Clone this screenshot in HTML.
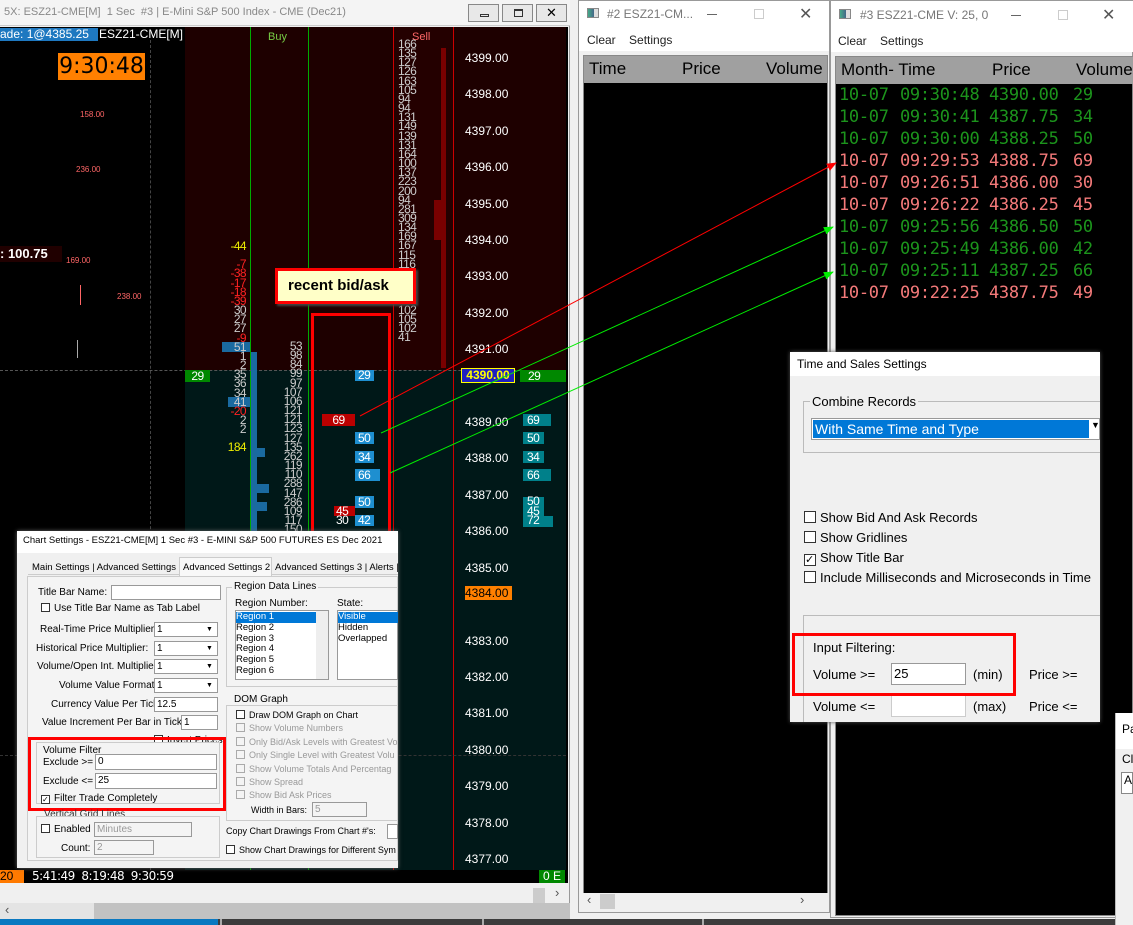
<!DOCTYPE html>
<html><head><meta charset="utf-8"><style>
*{margin:0;padding:0;box-sizing:border-box}
body{width:1133px;height:925px;overflow:hidden;background:#f0f0f0;position:relative;font-family:"Liberation Sans",sans-serif}
.a{position:absolute}
.n{font-family:"Liberation Sans",sans-serif;font-size:12px;letter-spacing:-0.6px;white-space:pre}
.ui{font-size:10px;color:#000;white-space:nowrap}
.cb{display:inline-block;width:9px;height:9px;border:1px solid #333;background:#fff;vertical-align:-1px;margin-right:4px}
.cbg{border-color:#aaa;background:#f4f4f4}
.inp{background:#fff;border:1px solid #999;height:15px;font-size:10px;padding-left:2px;line-height:13px}
.ts{font-family:"DejaVu Sans Mono",monospace;font-size:17px;white-space:pre;line-height:22px;letter-spacing:-0.3px}
.g{color:#1c941c}.r{color:#f47a7a}
</style></head><body>

<div class="a" style="left:0;top:0;width:570px;height:910px;background:#f0f0f0;border-right:1px solid #999"></div>
<div class="a" style="left:0;top:0;width:570px;height:26px;background:#f4f4f4;border-bottom:1px solid #ccc"></div>
<div class="a" style="left:4px;top:6px;font-size:11px;color:#888;white-space:pre">5X: ESZ21-CME[M]  1 Sec  #3 | E-Mini S&amp;P 500 Index - CME (Dec21)</div>
<div class="a" style="left:468px;top:4px;width:31px;height:18px;border:1px solid #888;background:#e8e8e8"><div class="a" style="left:11px;top:9px;width:9px;height:3px;border:1px solid #333"></div></div>
<div class="a" style="left:502px;top:4px;width:31px;height:18px;border:1px solid #888;background:#e8e8e8"><div class="a" style="left:11px;top:4px;width:9px;height:8px;border:1px solid #333;border-top-width:2px"></div></div>
<div class="a" style="left:536px;top:4px;width:31px;height:18px;border:1px solid #888;background:#e8e8e8;font-size:13px;text-align:center;line-height:16px">✕</div>

<div class="a" style="left:0;top:27px;width:568px;height:843px;background:#000"></div>
<div class="a" style="left:185px;top:27px;width:381px;height:343px;background:#1e0000"></div>
<div class="a" style="left:185px;top:370px;width:381px;height:500px;background:#001818"></div>
<div class="a" style="left:393px;top:27px;width:60px;height:343px;background:#240000"></div>
<div class="a" style="left:250px;top:27px;width:1px;height:843px;background:#0a0"></div>
<div class="a" style="left:308px;top:27px;width:1px;height:843px;background:#0a0"></div>
<div class="a" style="left:393px;top:27px;width:1px;height:843px;background:#c00"></div>
<div class="a" style="left:453px;top:27px;width:1px;height:843px;background:#c00"></div>
<div class="a" style="left:150px;top:40px;width:0;height:830px;border-left:1px dashed #444"></div>
<div class="a" style="left:0;top:370px;width:566px;height:0;border-top:1px dashed #555"></div>
<div class="a" style="left:0;top:755px;width:566px;height:0;border-top:1px dashed #333"></div>
<div class="a" style="left:441px;top:48px;width:5px;height:320px;background:#7a0000"></div>
<div class="a" style="left:434px;top:200px;width:12px;height:40px;background:#7a0000"></div>

<div class="a" style="left:0;top:28px;width:98px;height:13px;background:#1e78c0;color:#fff;font-size:12px;line-height:13px">ade: 1@4385.25</div>
<div class="a" style="left:99px;top:27px;color:#fff;font-size:12px">ESZ21-CME[M]</div>
<div class="a" style="left:268px;top:31px;color:#7c4;font-size:11px">Buy</div>
<div class="a" style="left:412px;top:31px;color:#f66;font-size:11px">Sell</div>
<div class="a" style="left:58px;top:53px;width:87px;height:27px;background:#ff8000;color:#000;font-size:22px;line-height:27px;text-align:center;font-family:'DejaVu Sans',sans-serif">9:30:48</div>
<div class="a" style="left:0;top:246px;width:62px;height:16px;background:#200000;color:#fff;font-weight:bold;font-size:13px;line-height:16px">: 100.75</div>
<div class="a" style="left:80px;top:110px;color:#f66;font-size:8px">158.00</div>
<div class="a" style="left:76px;top:165px;color:#f66;font-size:8px">236.00</div>
<div class="a" style="left:66px;top:256px;color:#f66;font-size:8px">169.00</div>
<div class="a" style="left:117px;top:292px;color:#f66;font-size:8px">238.00</div>
<div class="a" style="left:80px;top:285px;width:1px;height:20px;background:#f66"></div>
<div class="a" style="left:77px;top:340px;width:1px;height:18px;background:#aaa"></div>

<div class="a n" style="left:465px;top:40px;color:#fff;line-height:36.4px;letter-spacing:0">4399.00
4398.00
4397.00
4396.00
4395.00
4394.00
4393.00
4392.00
4391.00

4389.00
4388.00
4387.00
4386.00
4385.00

4383.00
4382.00
4381.00
4380.00
4379.00
4378.00
4377.00</div>
<div class="a" style="left:461px;top:368px;width:54px;height:15px;background:#2020c0;border:1px solid #ff0;color:#ff0;font-size:12px;font-weight:bold;line-height:13px;text-align:center">4390.00</div>
<div class="a" style="left:465px;top:586px;width:47px;height:14px;background:#ff8000;color:#000;font-size:12px;line-height:14px">4384.00</div>

<div class="a n" style="left:398px;top:40px;color:#ccc;line-height:9.15px">166
135
127
126
163
105
94
94
131
149
139
131
164
100
137
223
200
94
281
309
134
169
167
115
116
112
98
103
110
102
105
102
41</div>
<div class="a" style="left:251px;top:352px;width:6px;height:180px;background:#1a6aa0"></div>
<div class="a" style="left:251px;top:484px;width:18px;height:9px;background:#1a6aa0"></div>
<div class="a" style="left:251px;top:502px;width:16px;height:9px;background:#1a6aa0"></div>
<div class="a" style="left:251px;top:448px;width:14px;height:9px;background:#1a6aa0"></div>
<div class="a n" style="left:270px;top:342px;width:32px;text-align:right;color:#ccc;line-height:9.15px">53
98
84
99
97
107
106
121
121
123
127
135
262
119
110
288
147
286
109
117
150</div>
<div class="a" style="left:222px;top:342px;width:28px;height:10px;background:#1a6aa0"></div>
<div class="a" style="left:228px;top:397px;width:22px;height:10px;background:#1a6aa0"></div>
<div class="a n" style="left:212px;top:242px;width:34px;text-align:right;line-height:9.15px;color:#ccc"><span style="color:#ee0">-44</span>

<span style="color:#f22">-7
-38
-17
-18
-39</span>
30
27
27
<span style="color:#f22">-9</span>
51
1
2
35
36
34
41
<span style="color:#f22">-20</span>
2
2

<span style="color:#ee0">184</span></div>
<div class="a n" style="left:185px;top:370px;width:25px;height:12px;background:#080;color:#fff;text-align:center;line-height:12px">29</div>
<div class="a n" style="left:520px;top:370px;width:46px;height:12px;background:#080;color:#fff;line-height:12px;padding-left:8px">29</div>
<div class="a n" style="left:355px;top:370px;width:19px;height:11px;background:#1e8fd0;color:#fff;line-height:11px;padding-left:3px">29</div>
<div class="a n" style="left:322px;top:414px;width:33px;height:12px;background:#b00;color:#fff;line-height:12px;text-align:center">69</div>
<div class="a n" style="left:355px;top:432px;width:19px;height:12px;background:#1e8fd0;color:#fff;line-height:12px;padding-left:3px">50</div>
<div class="a n" style="left:355px;top:451px;width:19px;height:12px;background:#1e8fd0;color:#fff;line-height:12px;padding-left:3px">34</div>
<div class="a n" style="left:355px;top:469px;width:25px;height:12px;background:#1e8fd0;color:#fff;line-height:12px;padding-left:3px">66</div>
<div class="a n" style="left:355px;top:496px;width:19px;height:12px;background:#1e8fd0;color:#fff;line-height:12px;padding-left:3px">50</div>
<div class="a n" style="left:334px;top:506px;width:21px;height:10px;background:#b00;color:#fff;line-height:10px;padding-left:2px">45</div>
<div class="a n" style="left:334px;top:515px;color:#fff;line-height:10px;padding-left:2px">30</div>
<div class="a n" style="left:355px;top:515px;width:19px;height:11px;background:#1e8fd0;color:#fff;line-height:11px;padding-left:3px">42</div>
<div class="a n" style="left:523px;top:414px;width:28px;height:12px;background:#00808a;color:#fff;line-height:12px;padding-left:4px">69</div>
<div class="a n" style="left:523px;top:432px;width:21px;height:12px;background:#00808a;color:#fff;line-height:12px;padding-left:4px">50</div>
<div class="a n" style="left:523px;top:451px;width:21px;height:12px;background:#00808a;color:#fff;line-height:12px;padding-left:4px">34</div>
<div class="a n" style="left:523px;top:469px;width:28px;height:12px;background:#00808a;color:#fff;line-height:12px;padding-left:4px">66</div>
<div class="a n" style="left:523px;top:497px;width:21px;height:30px;background:#00808a;color:#fff;line-height:9.5px;padding-left:4px">50
45
72</div>
<div class="a" style="left:544px;top:516px;width:9px;height:11px;background:#00808a"></div>

<div class="a" style="left:275px;top:268px;width:141px;height:36px;background:#ffffc8;border:3px solid #f00;font-weight:bold;font-size:15px;line-height:30px;padding-left:10px;box-shadow:2px 2px 2px #444">recent bid/ask</div>
<div class="a" style="left:311px;top:313px;width:80px;height:240px;border:3px solid #f00;border-bottom:none"></div>

<div class="a" style="left:0;top:870px;width:568px;height:13px;background:#000"></div>
<div class="a" style="left:0;top:870px;width:24px;height:13px;background:#ff7a00;color:#000;font-size:12px;line-height:13px">20</div>
<div class="a" style="left:32px;top:869px;color:#fff;font-size:12px;white-space:pre;font-family:'DejaVu Sans',sans-serif;letter-spacing:-0.5px">5:41:49  8:19:48  9:30:59</div>
<div class="a" style="left:539px;top:870px;width:26px;height:13px;background:#080;color:#fff;font-size:12px;line-height:13px;text-align:center">0 E</div>
<div class="a" style="left:533px;top:888px;width:12px;height:15px;background:#ccc"></div>
<div class="a" style="left:555px;top:885px;font-size:13px;color:#555">›</div>
<div class="a" style="left:0;top:903px;width:570px;height:16px;background:#e4e4e4"></div>
<div class="a" style="left:94px;top:903px;width:476px;height:16px;background:#c2c2c2"></div>
<div class="a" style="left:5px;top:902px;font-size:13px;color:#555">‹</div>
<div class="a" style="left:0;top:919px;width:1133px;height:6px;background:#3c3c3c"></div>
<div class="a" style="left:0;top:919px;width:218px;height:6px;background:#0a78c0"></div>
<div class="a" style="left:220px;top:919px;width:2px;height:6px;background:#aaa"></div>
<div class="a" style="left:482px;top:919px;width:2px;height:6px;background:#aaa"></div>
<div class="a" style="left:702px;top:919px;width:2px;height:6px;background:#aaa"></div>

<div class="a" style="left:17px;top:531px;width:381px;height:337px;background:#f0f0f0;box-shadow:0 0 4px #666"></div>
<div class="a" style="left:17px;top:531px;width:381px;height:22px;background:#fff"></div>
<div class="a ui" style="left:23px;top:535px;font-size:9.5px">Chart Settings - ESZ21-CME[M]  1 Sec   #3 - E-MINI S&amp;P 500 FUTURES ES Dec 2021</div>
<div class="a ui" style="left:28px;top:557px;width:370px;height:18px;border-bottom:1px solid #ccc"></div>
<div class="a ui" style="left:32px;top:562px;font-size:9.5px;white-space:pre">Main Settings | Advanced Settings</div>
<div class="a ui" style="left:179px;top:557px;width:93px;height:19px;background:#f8f8f8;border:1px solid #ccc;border-bottom:none;font-size:9.5px;padding:4px 3px">Advanced Settings 2</div>
<div class="a ui" style="left:275px;top:562px;font-size:9.5px;white-space:pre">Advanced Settings 3 | Alerts |</div>
<div class="a" style="left:27px;top:576px;width:371px;height:285px;border:1px solid #ccc;background:#f4f4f4"></div>
<div class="a ui" style="left:38px;top:587px">Title Bar Name:</div>
<div class="a inp" style="left:111px;top:585px;width:110px"></div>
<div class="a ui" style="left:41px;top:603px"><span class="cb"></span>Use Title Bar Name as Tab Label</div>
<div class="a ui" style="left:40px;top:624px">Real-Time Price Multiplier:</div>
<div class="a ui" style="left:36px;top:643px">Historical Price Multiplier:</div>
<div class="a ui" style="left:37px;top:661px">Volume/Open Int. Multiplier:</div>
<div class="a ui" style="left:59px;top:680px">Volume Value Format:</div>
<div class="a ui" style="left:51px;top:699px">Currency Value Per Tick:</div>
<div class="a ui" style="left:42px;top:717px">Value Increment Per Bar in Ticks:</div>
<div class="a inp" style="left:154px;top:622px;width:64px">1<span style="float:right;width:11px;font-size:7px">▼</span></div>
<div class="a inp" style="left:154px;top:641px;width:64px">1<span style="float:right;width:11px;font-size:7px">▼</span></div>
<div class="a inp" style="left:154px;top:659px;width:64px">1<span style="float:right;width:11px;font-size:7px">▼</span></div>
<div class="a inp" style="left:154px;top:678px;width:64px">1<span style="float:right;width:11px;font-size:7px">▼</span></div>
<div class="a inp" style="left:154px;top:697px;width:64px">12.5</div>
<div class="a inp" style="left:181px;top:715px;width:37px">1</div>
<div class="a ui" style="left:154px;top:735px"><span class="cb"></span>Invert Prices</div>
<div class="a" style="left:36px;top:742px;width:184px;height:62px;border:1px solid #ccc;background:#f4f4f4"></div>
<div class="a ui" style="left:43px;top:745px">Volume Filter</div>
<div class="a ui" style="left:43px;top:757px">Exclude &gt;=</div>
<div class="a ui" style="left:43px;top:776px">Exclude &lt;=</div>
<div class="a inp" style="left:95px;top:754px;width:122px;height:16px">0</div>
<div class="a inp" style="left:95px;top:773px;width:122px;height:16px">25</div>
<div class="a ui" style="left:41px;top:793px"><span class="cb" style="font-size:8px;line-height:7px">✓</span>Filter Trade Completely</div>
<div class="a" style="left:28px;top:737px;width:198px;height:74px;border:3px solid #f00"></div>
<div class="a ui" style="left:44px;top:809px;color:#333">Vertical Grid Lines</div>
<div class="a" style="left:36px;top:816px;width:184px;height:42px;border:1px solid #ccc"></div>
<div class="a ui" style="left:41px;top:824px"><span class="cb"></span>Enabled</div>
<div class="a inp" style="left:94px;top:822px;width:98px;color:#999;background:#f4f4f4">Minutes</div>
<div class="a ui" style="left:61px;top:843px">Count:</div>
<div class="a inp" style="left:94px;top:840px;width:60px;color:#999;background:#f4f4f4">2</div>
<div class="a" style="left:226px;top:587px;width:172px;height:100px;border:1px solid #ccc"></div>
<div class="a ui" style="left:232px;top:581px;background:#f4f4f4;padding:0 2px">Region Data Lines</div>
<div class="a ui" style="left:235px;top:598px">Region Number:</div>
<div class="a ui" style="left:337px;top:598px">State:</div>
<div class="a" style="left:235px;top:610px;width:94px;height:70px;background:#fff;border:1px solid #999"></div>
<div class="a" style="left:316px;top:611px;width:12px;height:68px;background:#eee"></div>
<div class="a ui" style="left:236px;top:612px;width:80px;line-height:10.8px;font-size:9.5px"><div style="background:#0078d7;color:#fff">Region 1</div>Region 2<br>Region 3<br>Region 4<br>Region 5<br>Region 6</div>
<div class="a" style="left:337px;top:610px;width:61px;height:70px;background:#fff;border:1px solid #999"></div>
<div class="a ui" style="left:338px;top:612px;width:60px;line-height:10.8px;font-size:9.5px"><div style="background:#0078d7;color:#fff">Visible</div>Hidden<br>Overlapped</div>
<div class="a" style="left:226px;top:705px;width:172px;height:116px;border:1px solid #ccc"></div>
<div class="a ui" style="left:232px;top:694px;background:#f4f4f4;padding:0 2px">DOM Graph</div>
<div class="a ui" style="left:236px;top:709px;line-height:13.4px;font-size:9px"><span class="cb"></span>Draw DOM Graph on Chart<br><span style="color:#999"><span class="cb cbg"></span>Show Volume Numbers<br><span class="cb cbg"></span>Only Bid/Ask Levels with Greatest Vo<br><span class="cb cbg"></span>Only Single Level with Greatest Volu<br><span class="cb cbg"></span>Show Volume Totals And Percentag<br><span class="cb cbg"></span>Show Spread<br><span class="cb cbg"></span>Show Bid  Ask Prices</span></div>
<div class="a ui" style="left:251px;top:805px;font-size:9px">Width in Bars:</div>
<div class="a inp" style="left:312px;top:802px;width:55px;color:#999;background:#f4f4f4">5</div>
<div class="a ui" style="left:226px;top:826px;font-size:9px">Copy Chart Drawings From Chart #'s:</div>
<div class="a inp" style="left:387px;top:824px;width:11px"></div>
<div class="a ui" style="left:226px;top:845px;font-size:9px"><span class="cb"></span>Show Chart Drawings for Different Sym</div>

<div class="a" style="left:578px;top:0;width:252px;height:913px;background:#f0f0f0;border:1px solid #999"></div>
<div class="a" style="left:579px;top:1px;width:250px;height:28px;background:#fff"></div>
<div class="a" style="left:587px;top:8px;width:12px;height:10px;border:1px solid #888;background:linear-gradient(90deg,#4a8,#468 60%,#ddd 60%)"></div>
<div class="a" style="left:607px;top:7px;font-size:12px;color:#777">#2 ESZ21-CM...</div>
<div class="a" style="left:707px;top:14px;width:10px;height:1px;background:#666"></div>
<div class="a" style="left:754px;top:9px;width:10px;height:10px;border:1px solid #ccc"></div>
<div class="a" style="left:799px;top:4px;font-size:16px;color:#555">✕</div>
<div class="a" style="left:579px;top:29px;width:250px;height:22px;background:#fff"></div>
<div class="a" style="left:587px;top:33px;font-size:12px;color:#222;white-space:pre">Clear    Settings</div>
<div class="a" style="left:583px;top:55px;width:245px;height:840px;background:#000;border:1px solid #888"></div>
<div class="a" style="left:584px;top:56px;width:243px;height:27px;background:#a0a0a0"></div>
<div class="a" style="left:589px;top:59px;font-size:17px">Time</div>
<div class="a" style="left:682px;top:59px;font-size:17px">Price</div>
<div class="a" style="left:766px;top:59px;font-size:17px;width:61px;overflow:hidden">Volume</div>
<div class="a" style="left:583px;top:893px;width:245px;height:17px;background:#f0f0f0"></div>
<div class="a" style="left:600px;top:894px;width:15px;height:15px;background:#ccc"></div>
<div class="a" style="left:587px;top:892px;font-size:13px;color:#555">‹</div>
<div class="a" style="left:800px;top:892px;font-size:13px;color:#555">›</div>

<div class="a" style="left:830px;top:0;width:303px;height:918px;background:#f0f0f0;border:1px solid #999"></div>
<div class="a" style="left:831px;top:1px;width:302px;height:29px;background:#fff"></div>
<div class="a" style="left:839px;top:9px;width:12px;height:10px;border:1px solid #888;background:linear-gradient(90deg,#4a8,#468 60%,#ddd 60%)"></div>
<div class="a" style="left:860px;top:8px;font-size:12px;color:#777">#3 ESZ21-CME  V: 25, 0</div>
<div class="a" style="left:1011px;top:15px;width:10px;height:1px;background:#666"></div>
<div class="a" style="left:1058px;top:10px;width:10px;height:10px;border:1px solid #ccc"></div>
<div class="a" style="left:1102px;top:5px;font-size:16px;color:#555">✕</div>
<div class="a" style="left:831px;top:30px;width:302px;height:22px;background:#fff"></div>
<div class="a" style="left:838px;top:34px;font-size:12px;color:#222;white-space:pre">Clear    Settings</div>
<div class="a" style="left:835px;top:56px;width:298px;height:860px;background:#000;border:1px solid #888"></div>
<div class="a" style="left:836px;top:57px;width:297px;height:27px;background:#a0a0a0"></div>
<div class="a" style="left:841px;top:60px;font-size:17px">Month- Time</div>
<div class="a" style="left:992px;top:60px;font-size:17px">Price</div>
<div class="a" style="left:1076px;top:60px;font-size:17px">Volume</div>
<div class="a ts" style="left:839px;top:84px"><span class="g">10-07
10-07
10-07</span>
<span class="r">10-07
10-07
10-07</span>
<span class="g">10-07
10-07
10-07</span>
<span class="r">10-07</span></div>
<div class="a ts" style="left:900px;top:84px"><span class="g">09:30:48
09:30:41
09:30:00</span>
<span class="r">09:29:53
09:26:51
09:26:22</span>
<span class="g">09:25:56
09:25:49
09:25:11</span>
<span class="r">09:22:25</span></div>
<div class="a ts" style="left:989px;top:84px"><span class="g">4390.00
4387.75
4388.25</span>
<span class="r">4388.75
4386.00
4386.25</span>
<span class="g">4386.50
4386.00
4387.25</span>
<span class="r">4387.75</span></div>
<div class="a ts" style="left:1073px;top:84px"><span class="g">29
34
50</span>
<span class="r">69
30
45</span>
<span class="g">50
42
66</span>
<span class="r">49</span></div>

<div class="a" style="left:1115px;top:713px;width:18px;height:212px;background:#f0f0f0;border-left:1px solid #bbb"></div>
<div class="a" style="left:1116px;top:713px;width:17px;height:36px;background:#fff"></div>
<div class="a" style="left:1122px;top:722px;font-size:12px">Pa</div>
<div class="a" style="left:1122px;top:752px;font-size:12px">Cl</div>
<div class="a" style="left:1121px;top:772px;width:12px;height:22px;border:1px solid #888;background:#fff;font-size:12px;padding-left:2px">A</div>

<div class="a" style="left:790px;top:352px;width:310px;height:370px;background:#f0f0f0;box-shadow:0 0 4px #555"></div>
<div class="a" style="left:790px;top:352px;width:310px;height:24px;background:#fff"></div>
<div class="a" style="left:797px;top:357px;font-size:12px">Time and Sales Settings</div>
<div class="a" style="left:803px;top:401px;width:297px;height:52px;border:1px solid #bbb;border-right:none"></div>
<div class="a" style="left:810px;top:394px;font-size:13px;background:#f0f0f0;padding:0 2px">Combine Records</div>
<div class="a" style="left:811px;top:418px;width:289px;height:22px;border:1px solid #999;background:#fff"></div>
<div class="a" style="left:813px;top:420px;width:276px;height:18px;background:#0078d7;color:#fff;font-size:14px;line-height:18px;padding-left:2px">With Same Time and Type</div>
<div class="a" style="left:1091px;top:420px;font-size:9px">▼</div>
<div class="a" style="left:804px;top:508px;font-size:13px;line-height:20px;white-space:nowrap"><span class="cb" style="width:12px;height:12px"></span>Show Bid And Ask Records<br><span class="cb" style="width:12px;height:12px"></span>Show Gridlines<br><span class="cb" style="width:12px;height:12px;font-size:11px;line-height:10px">✓</span>Show Title Bar<br><span class="cb" style="width:12px;height:12px"></span>Include Milliseconds and Microseconds in Time</div>
<div class="a" style="left:803px;top:615px;width:297px;height:107px;border:1px solid #bbb;border-right:none;border-bottom:none"></div>
<div class="a" style="left:811px;top:640px;font-size:13px;background:#f0f0f0;padding:0 2px">Input Filtering:</div>
<div class="a" style="left:813px;top:667px;font-size:13px">Volume &gt;=</div>
<div class="a" style="left:891px;top:663px;width:75px;height:22px;border:1px solid #999;background:#fff;font-size:13px;padding:2px 2px">25</div>
<div class="a" style="left:973px;top:667px;font-size:13px">(min)</div>
<div class="a" style="left:1029px;top:667px;font-size:13px">Price &gt;=</div>
<div class="a" style="left:813px;top:699px;font-size:13px">Volume &lt;=</div>
<div class="a" style="left:891px;top:695px;width:75px;height:22px;border:1px solid #ccc;background:#fff"></div>
<div class="a" style="left:973px;top:699px;font-size:13px">(max)</div>
<div class="a" style="left:1029px;top:699px;font-size:13px">Price &lt;=</div>
<div class="a" style="left:792px;top:633px;width:224px;height:63px;border:3px solid #f00"></div>

<svg class="a" style="left:0;top:0" width="1133" height="925">
<defs>
<marker id="r" markerWidth="10" markerHeight="8" refX="9" refY="4" orient="auto"><path d="M0,0 L10,4 L0,8 z" fill="#f00"/></marker>
<marker id="g" markerWidth="10" markerHeight="8" refX="9" refY="4" orient="auto"><path d="M0,0 L10,4 L0,8 z" fill="#0e0"/></marker>
</defs>
<line x1="360" y1="416" x2="836" y2="163" stroke="#f00" stroke-width="1" marker-end="url(#r)"/>
<line x1="381" y1="433" x2="833" y2="227" stroke="#0e0" stroke-width="1" marker-end="url(#g)"/>
<line x1="390" y1="473" x2="833" y2="272" stroke="#0e0" stroke-width="1" marker-end="url(#g)"/>
</svg>
</body></html>
